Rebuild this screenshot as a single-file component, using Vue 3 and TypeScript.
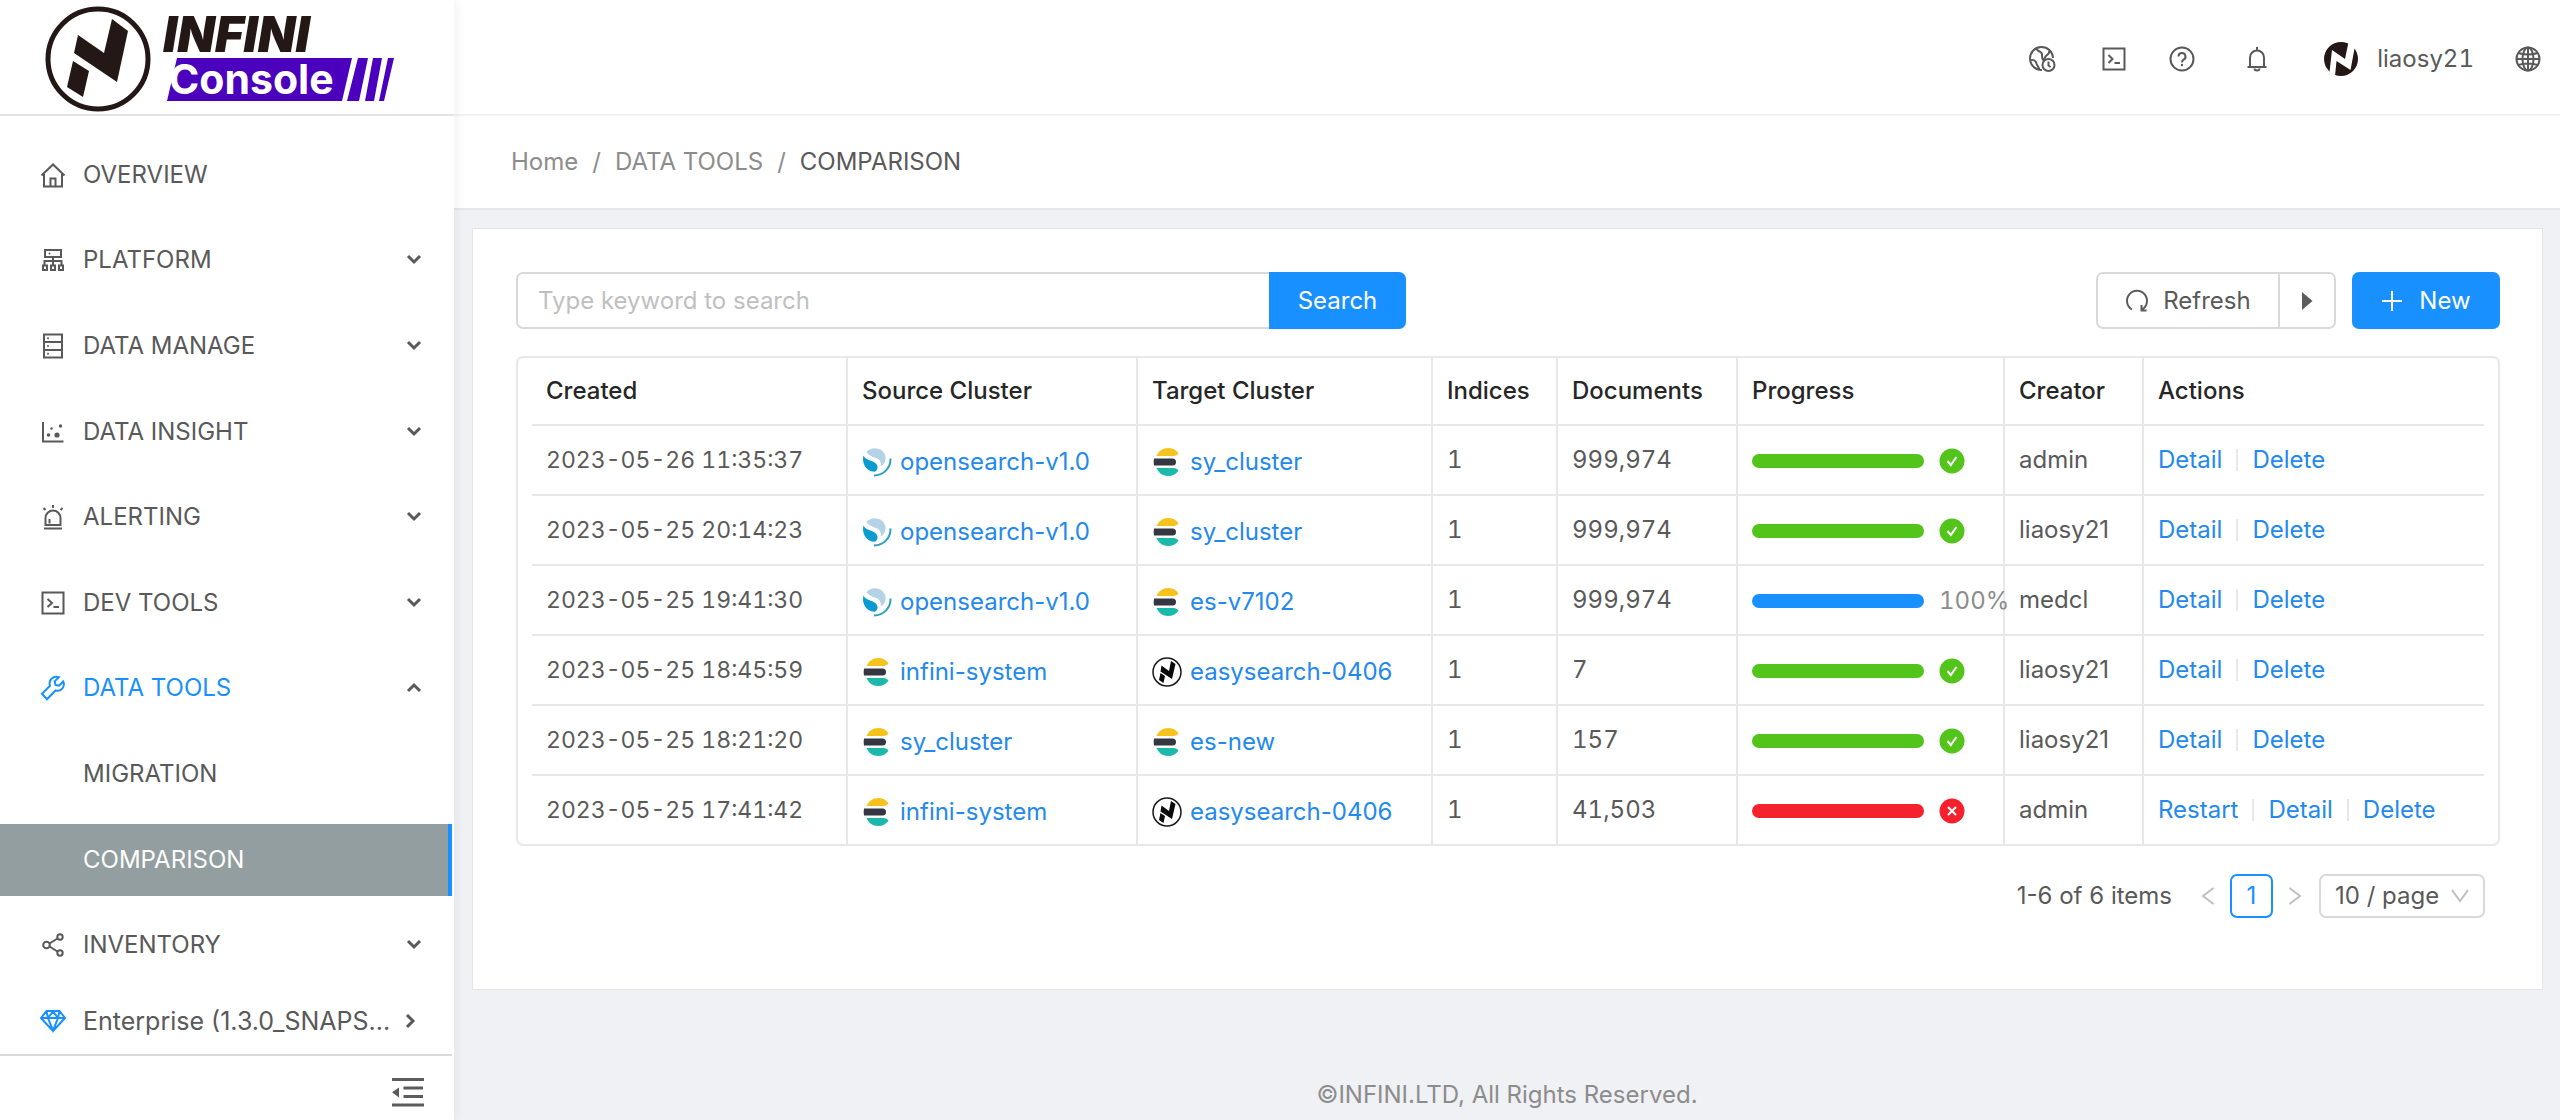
<script setup lang="ts">
import { ref } from 'vue'

type Engine = 'opensearch' | 'elastic' | 'easysearch'
type Status = 'success' | 'active' | 'error'

interface Cluster {
  name: string
  engine: Engine
}

interface Task {
  created: string
  source: Cluster
  target: Cluster
  indices: string
  documents: string
  status: Status
  percent: number
  creator: string
  actions: string[]
}

interface MenuItem {
  key: string
  label: string
  icon: string
  arrow: '' | 'down' | 'up'
}

const menu: MenuItem[] = [
  { key: 'overview', label: 'OVERVIEW', icon: 'home', arrow: '' },
  { key: 'platform', label: 'PLATFORM', icon: 'cluster', arrow: 'down' },
  { key: 'manage', label: 'DATA MANAGE', icon: 'database', arrow: 'down' },
  { key: 'insight', label: 'DATA INSIGHT', icon: 'chart', arrow: 'down' },
  { key: 'alerting', label: 'ALERTING', icon: 'alert', arrow: 'down' },
  { key: 'dev', label: 'DEV TOOLS', icon: 'code', arrow: 'down' },
  { key: 'data-tools', label: 'DATA TOOLS', icon: 'tool', arrow: 'up' },
  { key: 'migration', label: 'MIGRATION', icon: '', arrow: '' },
  { key: 'comparison', label: 'COMPARISON', icon: '', arrow: '' },
  { key: 'inventory', label: 'INVENTORY', icon: 'share', arrow: 'down' },
]

const opensearch: Cluster = { name: 'opensearch-v1.0', engine: 'opensearch' }
const sy: Cluster = { name: 'sy_cluster', engine: 'elastic' }
const system: Cluster = { name: 'infini-system', engine: 'elastic' }
const easy: Cluster = { name: 'easysearch-0406', engine: 'easysearch' }

const tasks: Task[] = [
  { created: '2023-05-26 11:35:37', source: opensearch, target: sy, indices: '1', documents: '999,974', status: 'success', percent: 100, creator: 'admin', actions: ['Detail', 'Delete'] },
  { created: '2023-05-25 20:14:23', source: opensearch, target: sy, indices: '1', documents: '999,974', status: 'success', percent: 100, creator: 'liaosy21', actions: ['Detail', 'Delete'] },
  { created: '2023-05-25 19:41:30', source: opensearch, target: { name: 'es-v7102', engine: 'elastic' }, indices: '1', documents: '999,974', status: 'active', percent: 100, creator: 'medcl', actions: ['Detail', 'Delete'] },
  { created: '2023-05-25 18:45:59', source: system, target: easy, indices: '1', documents: '7', status: 'success', percent: 100, creator: 'liaosy21', actions: ['Detail', 'Delete'] },
  { created: '2023-05-25 18:21:20', source: sy, target: { name: 'es-new', engine: 'elastic' }, indices: '1', documents: '157', status: 'success', percent: 100, creator: 'liaosy21', actions: ['Detail', 'Delete'] },
  { created: '2023-05-25 17:41:42', source: system, target: easy, indices: '1', documents: '41,503', status: 'error', percent: 100, creator: 'admin', actions: ['Restart', 'Detail', 'Delete'] },
]

const columns = ['Created', 'Source Cluster', 'Target Cluster', 'Indices', 'Documents', 'Progress', 'Creator', 'Actions']

const keyword = ref('')
const pageSize = ref('10')
</script>

<template>
  <div class="app">
    <aside class="sider">
      <a class="logo" href="#" aria-label="INFINI Console">
        <svg width="400" height="114" viewBox="0 0 400 114">
          <circle cx="98" cy="59" r="50" fill="none" stroke="#231815" stroke-width="5" />
          <path fill="#231815" d="M112 19l16 12-11 51-43-29 4-18 26 18zM73 61l16 10-6 26-16-10z" />
          <text class="logo-top" x="163" y="52">INFINI</text>
          <path fill="#4b00bd" d="M177 58h175l-10 43H167zM358 58h10l-9 43h-12zM373 58h9l-8 43h-9zM388 58h6l-10 43h-5z" />
          <text class="logo-sub" x="169" y="94">Console</text>
        </svg>
      </a>
      <nav class="nav">
        <ul class="menu">
          <li v-for="item in menu" :key="item.key" :class="['menu-item', item.key]">
            <a href="#" class="menu-link">
              <span class="menu-icon">
                <svg v-if="item.icon === 'home'" class="ic" viewBox="0 0 26 26">
                  <path d="M1.500 13.500L13 2.500l11.500 11M4 12v12.500h18V12M10.500 24v-7.500h5V24" />
                </svg>
                <svg v-else-if="item.icon === 'cluster'" class="ic" viewBox="0 0 26 26">
                  <path d="M5 3h16v7H5zM13 10v8M4.500 18v-4h17v4M3 18.500h4V23H3zM11 18.500h4V23h-4zM19 18.500h4V23h-4z" />
                  <circle cx="9.500" cy="6.500" r="1" class="solid" />
                </svg>
                <svg v-else-if="item.icon === 'database'" class="ic" viewBox="0 0 26 26">
                  <path d="M4 1.500h18v23H4zM4 9h18M4 17h18" />
                  <circle cx="8" cy="5.300" r="1" class="solid" />
                  <circle cx="8" cy="13" r="1" class="solid" />
                  <circle cx="8" cy="20.700" r="1" class="solid" />
                </svg>
                <svg v-else-if="item.icon === 'chart'" class="ic" viewBox="0 0 26 26">
                  <path d="M3 3v19.500h20.500" />
                  <circle cx="8.500" cy="16" r="1.800" class="solid" />
                  <circle cx="17" cy="16" r="2.600" class="solid" />
                  <circle cx="11.500" cy="9.500" r="1.200" class="solid" />
                  <circle cx="20.500" cy="7" r="1.700" class="solid" />
                </svg>
                <svg v-else-if="item.icon === 'alert'" class="ic" viewBox="0 0 26 26">
                  <path d="M5.500 21v-7a7.500 7.500 0 0 1 15 0v7zM4 24.500h18M9.500 19.500V15M13 1v3M3.500 4l2 2M22.500 4l-2 2" />
                </svg>
                <svg v-else-if="item.icon === 'code'" class="ic" viewBox="0 0 26 26">
                  <path d="M2.500 2.500h21v21h-21zM7.500 9l4.500 4-4.500 4M13.500 17H19" />
                </svg>
                <svg v-else-if="item.icon === 'tool'" class="ic" viewBox="0 0 26 26">
                  <path d="M23.200 6.500l-4.200 4.200-3.500-.8-.8-3.500 4.200-4.200c-3-1-6-.2-7.800 2-1.500 2-1.900 4.300-1.100 6.500L2 18.700l5 5.500 8.500-8.700c2.200.7 4.600.2 6.300-1.500 2-2 2.500-5 1.400-7.500z" />
                </svg>
                <svg v-else-if="item.icon === 'share'" class="ic" viewBox="0 0 26 26">
                  <circle cx="6.500" cy="13" r="3.300" />
                  <circle cx="20" cy="5" r="2.700" />
                  <circle cx="20" cy="21" r="2.700" />
                  <path d="M9.500 11.500l8-5M9.500 14.500l8 5" />
                </svg>
              </span>
              <span class="menu-label">{{ item.label }}</span>
              <svg v-if="item.arrow" class="arrow" viewBox="0 0 16 16">
                <path v-if="item.arrow === 'down'" d="M2 4l6 6 6-6" />
                <path v-else d="M2 11l6-6 6 6" />
              </svg>
            </a>
          </li>
        </ul>
        <a href="#" class="menu-link license">
          <span class="menu-icon blue">
            <svg class="ic" viewBox="0 0 26 26">
              <path d="M6.500 3h13L25 10 13 23 1 10zM1.500 10h23M6.500 3L8 10l5 12.500L18 10l1.500-7M8 10l5-6.500 5 6.500" />
            </svg>
          </span>
          <span class="menu-label">Enterprise (1.3.0_SNAPS...</span>
          <svg class="arrow" viewBox="0 0 16 16"><path d="M5 2l6 6-6 6" /></svg>
        </a>
      </nav>
      <button class="trigger" type="button" aria-label="Collapse menu">
        <svg width="32" height="30" viewBox="0 0 32 30">
          <path d="M0 1.500h32M11.500 10H31M11.500 18.500H31M0 27h32" fill="none" stroke="#5c5c5c" stroke-width="3" />
          <path d="M0 14.300L7 9.500v10z" fill="#5c5c5c" />
        </svg>
      </button>
    </aside>

    <div class="body">
      <header class="header">
        <button class="hbtn time" type="button" aria-label="Time zone">
          <svg width="28" height="28" viewBox="0 0 28 28">
            <path d="M25 13A11.500 11.500 0 1 0 14 25M8.500 3.500c1 3.500 5 2.500 5.500 5.500 0 2-.5 5 1.500 6.500 1-1.500 1-3 2.500-4.500s3-1.500 3.500-5M2.500 15c3-.5 5.500 1 6 3.500.5 2 2 3 3 6" />
            <circle cx="20.500" cy="20" r="6" />
            <path d="M20.500 16.500v4l2 1.500" />
          </svg>
        </button>
        <button class="hbtn console" type="button" aria-label="Console">
          <svg width="24" height="24" viewBox="0 0 24 24"><path d="M1.500 1.500h21v21h-21zM6.500 8l4 4-4 4M12.500 16H18" /></svg>
        </button>
        <button class="hbtn help" type="button" aria-label="Help">
          <svg width="26" height="26" viewBox="0 0 26 26">
            <circle cx="13" cy="13" r="11.500" />
            <path d="M9.500 10.500a3.500 3.500 0 1 1 5 3.200c-1.200.7-1.500 1.200-1.500 2.800" />
            <circle cx="13" cy="19" r="1.200" class="dot" />
          </svg>
        </button>
        <button class="hbtn bell" type="button" aria-label="Notifications">
          <svg width="22" height="26" viewBox="0 0 22 26"><path d="M1.500 21h19M4 21v-9.500a7 7 0 0 1 14 0V21M11 1v3M8.500 22.500a2.500 2 0 0 0 5 0" /></svg>
        </button>
        <a class="user" href="#">
          <svg width="34" height="34" viewBox="0 0 34 34">
            <circle cx="17" cy="17" r="17" fill="#231815" />
            <path fill="#fff" d="M8 8l13 9L24.500 0 31 4l-4.500 24-14-9L11 34 5.500 30z" />
          </svg>
          <span class="num">liaosy21</span>
        </a>
        <button class="hbtn globe" type="button" aria-label="Language">
          <svg width="26" height="26" viewBox="0 0 26 26">
            <circle cx="13" cy="13" r="11.500" />
            <ellipse cx="13" cy="13" rx="5.500" ry="11.500" />
            <path d="M13 1.500v23M1.500 13h23M3.500 7c5 2 14 2 19 0M3.500 19c5-2 14-2 19 0" />
          </svg>
        </button>
      </header>

      <nav class="crumbs" aria-label="Breadcrumb">
        <a href="#">Home</a><span>/</span><a href="#">DATA TOOLS</a><span>/</span><strong>COMPARISON</strong>
      </nav>

      <main class="card">
        <div class="toolbar">
          <form class="search" @submit.prevent>
            <input v-model="keyword" type="text" aria-label="Search keyword" placeholder="Type keyword to search" />
            <button type="submit">Search</button>
          </form>
          <div class="tools">
            <div class="group">
              <button type="button" class="refresh">
                <svg width="24" height="24" viewBox="0 0 24 24">
                  <path d="M7 20.500A10 10 0 1 1 17 20.500M16.500 16v5.500h5" fill="none" stroke="#5c5c5c" stroke-width="2" />
                </svg>
                <span>Refresh</span>
              </button>
              <button type="button" class="play" aria-label="Auto refresh">
                <svg width="12" height="18" viewBox="0 0 12 18"><path d="M1 0l10.500 9L1 18z" fill="#5c5c5c" /></svg>
              </button>
            </div>
            <button type="button" class="new">
              <svg width="22" height="22" viewBox="0 0 22 22"><path d="M11 1v20M1 11h20" stroke="#fff" stroke-width="2" /></svg>
              <span>New</span>
            </button>
          </div>
        </div>

        <div class="table-box">
          <table>
            <colgroup>
              <col v-for="(c, i) in columns" :key="c" :class="'c' + i" />
            </colgroup>
            <thead>
              <tr><th v-for="c in columns" :key="c" scope="col">{{ c }}</th></tr>
            </thead>
            <tbody>
              <tr v-for="t in tasks" :key="t.created">
                <td class="num date">{{ t.created }}</td>
                <td v-for="(cl, k) in [t.source, t.target]" :key="k">
                  <a href="#" class="cluster-link">
                    <svg v-if="cl.engine === 'opensearch'" width="30" height="30" viewBox="0 0 30 30">
                      <path fill="#b5d3e6" d="M4.500 5C7 2 12 .2 17 2c5 1.800 8 7.500 6 12.500-1.200 3-3 4.500-4.500 4.800 1-3 .2-5.500-3-7.500-3.800-2-8.500-2.500-11-6.800z" />
                      <path fill="#0b9bd0" d="M1.500 8.500c2 3.500 4.500 4.200 8 5.500 3.800 1.500 6.500 3.500 6 7-.3 2-1.500 3.300-3 3.700-4.500-.2-8.500-2.700-10.500-7.500-1.200-3-1.200-6-.5-8.700z" />
                      <path fill="none" stroke="#2f9fc0" stroke-width="2" d="M28.500 11.500c.3 9-6.500 17-16.500 17" />
                    </svg>
                    <svg v-else-if="cl.engine === 'elastic'" width="30" height="30" viewBox="0 0 30 30">
                      <path fill="#f6c31c" d="M4.500 9C6.500 4 11 1 16 1c4.500 0 8 1.800 10.500 5.200C25.500 8 23.500 9 21.500 9z" />
                      <path fill="#343741" d="M2 11.500h18.500a3.500 3.500 0 0 1 0 7H2q-.7-3.500 0-7z" />
                      <path fill="#1bb9ab" d="M4.500 21h17c2 0 4 .8 5 2.700C24 27.200 20.500 29 16 29c-5 0-9.500-3-11.500-8z" />
                    </svg>
                    <svg v-else width="30" height="30" viewBox="0 0 30 30">
                      <circle cx="15" cy="15" r="14" fill="#fff" stroke="#1a1a1a" stroke-width="1.500" />
                      <path fill="#0a0a0a" d="M19 4l4.500 3-3.500 15-11.500-7.500 1-6L17 14zM8.500 16l4.500 3-1.500 7L7 23z" />
                    </svg>
                    <span>{{ cl.name }}</span>
                  </a>
                </td>
                <td class="num">{{ t.indices }}</td>
                <td class="num">{{ t.documents }}</td>
                <td>
                  <div :class="['progress', t.status]">
                    <span class="track"><span class="fill" :style="{ width: t.percent + '%' }"></span></span>
                    <span v-if="t.status === 'active'" class="pct num">{{ t.percent }}%</span>
                    <svg v-else width="26" height="26" viewBox="0 0 26 26">
                      <circle cx="13" cy="13" r="12.500" class="badge" />
                      <path v-if="t.status === 'success'" d="M8.500 13l3.300 4 5.700-8" />
                      <path v-else d="M9 9l8 8M17 9l-8 8" />
                    </svg>
                  </div>
                </td>
                <td>{{ t.creator }}</td>
                <td>
                  <div class="actions"><a v-for="a in t.actions" :key="a" href="#">{{ a }}</a></div>
                </td>
              </tr>
            </tbody>
          </table>
        </div>

        <div class="pager">
          <span class="total">1-6 of 6 items</span>
          <button type="button" class="step" aria-label="Previous page">
            <svg width="14" height="18" viewBox="0 0 14 18"><path d="M12.500 1L2 9l10.500 8" /></svg>
          </button>
          <button type="button" class="page">1</button>
          <button type="button" class="step" aria-label="Next page">
            <svg width="14" height="18" viewBox="0 0 14 18"><path d="M1.500 1L12 9 1.500 17" /></svg>
          </button>
          <span class="size">
            <select v-model="pageSize" aria-label="Page size">
              <option value="10">10 / page</option>
              <option value="20">20 / page</option>
            </select>
            <svg width="18" height="16" viewBox="0 0 18 16"><path d="M1 2l8 11 8-11" /></svg>
          </span>
        </div>
      </main>

      <footer class="footer">©INFINI.LTD, All Rights Reserved.</footer>
    </div>
  </div>
</template>

<style>
body {
  background: #f0f1f5;
}
</style>

<style scoped>
* {
  box-sizing: border-box;
}
.app {
  display: flex;
  min-height: 100vh;
  font-family: Inter, "Noto Sans", sans-serif;
  font-size: 24px;
  line-height: 36px;
  color: #595959;
}
a {
  color: inherit;
  text-decoration: none;
}
button,
input,
select {
  font: inherit;
  color: inherit;
  margin: 0;
}
button {
  cursor: pointer;
  padding: 0;
  background: none;
  border: 0;
}
svg {
  flex: none;
  display: block;
}
.num {
  font-variant-numeric: tabular-nums;
}
.sider {
  position: relative;
  z-index: 1;
  flex: 0 0 454px;
  min-width: 0;
  height: 100vh;
  display: flex;
  flex-direction: column;
  background: #fff;
  box-shadow: 2px 0 12px rgba(29, 35, 41, 0.06);
}
.logo {
  flex: none;
  height: 116px;
  border-bottom: 2px solid #e4e4e4;
}
.logo-top {
  font-size: 49px;
  font-weight: 900;
  font-style: italic;
  fill: #231815;
}
.logo-sub {
  font-size: 41px;
  font-weight: 700;
  fill: #fff;
}
.nav {
  flex: 1 1 0;
  min-height: 0;
  display: flex;
  flex-direction: column;
  padding-top: 16px;
  margin-right: 2px;
}
.menu {
  flex: 1 1 0;
  min-height: 0;
  list-style: none;
  margin: 0;
  padding: 0;
  display: flex;
  flex-direction: column;
}
.menu-item {
  flex: 0 1 86px;
  display: flex;
  flex-direction: column;
  justify-content: center;
}
.menu-link {
  display: flex;
  align-items: center;
  height: 72px;
  padding: 0 30px 0 40px;
}
.menu-icon {
  flex: 0 0 26px;
  margin-right: 17px;
}
.ic {
  width: 26px;
  height: 26px;
  fill: none;
  stroke: currentColor;
  stroke-width: 2;
}
.solid {
  fill: currentColor;
  stroke: none;
}
.menu-label {
  flex: 1;
  min-width: 0;
  white-space: nowrap;
}
.arrow {
  width: 16px;
  height: 16px;
  margin-left: 16px;
  fill: none;
  stroke: #595959;
  stroke-width: 3;
}
.data-tools .menu-link,
.blue {
  color: #1890ff;
}
.comparison .menu-link {
  background: #929e9f;
  color: #fff;
  border-right: 4px solid #1890ff;
}
.license {
  flex: none;
  height: 66px;
  font-size: 25px;
}
.license .arrow {
  margin-left: 8px;
  margin-right: 4px;
}
.trigger {
  flex: none;
  display: flex;
  justify-content: flex-end;
  height: 66px;
  margin-right: 2px;
  padding: 22px 28px 0 0;
  border-top: 2px solid #d9d9d9;
}
.body {
  flex: 1;
  min-width: 0;
  display: flex;
  flex-direction: column;
}
.header {
  display: flex;
  justify-content: flex-end;
  align-items: center;
  height: 116px;
  padding: 4px 19px 0 0;
  background: #fff;
  border-bottom: 2px solid #f2f2f2;
}
.hbtn svg {
  fill: none;
  stroke: #595959;
  stroke-width: 2;
}
.hbtn .dot {
  fill: #595959;
  stroke: none;
}
.console {
  margin-left: 46px;
}
.help {
  margin-left: 43px;
}
.bell {
  margin-left: 51px;
}
.user {
  display: flex;
  align-items: center;
  gap: 19px;
  margin: 0 41px 0 56px;
}
.crumbs {
  display: flex;
  align-items: center;
  gap: 14px;
  height: 94px;
  padding-left: 57px;
  background: #fff;
  border-bottom: 2px solid #e6e6e9;
  color: #8c8c8c;
}
.crumbs strong {
  font-weight: 400;
  color: #595959;
}
.card {
  margin: 18px 17px 0 18px;
  padding: 43px 42px 71px 43px;
  background: #fff;
  border: 1px solid #e6e6e6;
}
.toolbar {
  display: flex;
  justify-content: space-between;
  gap: 16px;
  height: 57px;
  margin-bottom: 27px;
}
.search {
  display: flex;
  flex: 0 1 890px;
  min-width: 0;
}
.search input {
  flex: 1;
  min-width: 0;
  padding: 0 20px;
  border: 2px solid #d9d9d9;
  border-right: 0;
  border-radius: 7px 0 0 7px;
  background: #fff;
  outline: 0;
}
.search input::placeholder {
  color: #bfbfbf;
  opacity: 1;
}
.search button {
  flex: 0 0 137px;
  color: #fff;
  background: #1890ff;
  border-radius: 0 7px 7px 0;
}
.tools {
  display: flex;
  gap: 16px;
}
.group {
  display: flex;
  border: 2px solid #d9d9d9;
  border-radius: 7px;
}
.refresh {
  display: flex;
  align-items: center;
  justify-content: center;
  gap: 14px;
  width: 182px;
  border-right: 2px solid #d9d9d9;
}
.play {
  display: flex;
  align-items: center;
  justify-content: center;
  width: 54px;
}
.new {
  display: flex;
  align-items: center;
  justify-content: center;
  gap: 16px;
  width: 148px;
  color: #fff;
  background: #1890ff;
  border-radius: 7px;
}
.table-box {
  padding: 0 14px;
  border: 2px solid #e8e8e8;
  border-radius: 7px;
}
table {
  width: 100%;
  table-layout: fixed;
  border-collapse: separate;
  border-spacing: 0;
}
.c0 { width: 316px; }
.c1 { width: 290px; }
.c2 { width: 295px; }
.c3 { width: 125px; }
.c4 { width: 180px; }
.c5 { width: 267px; }
.c6 { width: 139px; }
th,
td {
  height: 70px;
  padding: 0 0 0 14px;
  text-align: left;
  white-space: nowrap;
  border-right: 2px solid #e8e8e8;
  border-bottom: 2px solid #e8e8e8;
}
th {
  height: 68px;
  font-weight: 500;
  color: #262626;
}
th:last-child,
td:last-child {
  border-right: 0;
}
tbody tr:last-child td {
  height: 68px;
  border-bottom: 0;
}
.date {
  font-size: 23px;
}
.cluster-link {
  display: flex;
  align-items: center;
  gap: 8px;
  padding-top: 4px;
  color: #2389ee;
}
.progress {
  display: flex;
  align-items: center;
  gap: 15px;
  height: 36px;
  margin-top: 2px;
}
.track {
  flex: 0 0 172px;
  height: 14px;
  border-radius: 7px;
  background: #f5f5f5;
}
.fill {
  display: block;
  height: 14px;
  border-radius: 7px;
  background: #52c41a;
}
.active .fill {
  background: #1890ff;
}
.error .fill {
  background: #f5222d;
}
.badge {
  fill: #52c41a;
  stroke: none;
}
.error .badge {
  fill: #f5222d;
}
.progress svg {
  fill: none;
  stroke: #fff;
  stroke-width: 2;
}
.pct {
  color: #8c8c8c;
}
.actions {
  display: flex;
  align-items: center;
  color: #2389ee;
}
.actions a + a::before {
  content: "";
  display: inline-block;
  width: 2px;
  height: 22px;
  margin: 0 14px;
  vertical-align: -3px;
  background: #e8e8e8;
}
.pager {
  display: flex;
  align-items: center;
  justify-content: flex-end;
  margin: 28px 15px 0 0;
}
.step {
  width: 14px;
  margin: 0 15px;
}
.step svg,
.size svg {
  fill: none;
  stroke: #bfbfbf;
  stroke-width: 2;
}
.total {
  margin-right: 14px;
}
.page {
  width: 43px;
  height: 44px;
  color: #1890ff;
  border: 2px solid #1890ff;
  border-radius: 7px;
}
.size {
  position: relative;
  margin-left: 2px;
}
.size select {
  display: block;
  width: 166px;
  height: 44px;
  padding: 0 0 0 14px;
  appearance: none;
  background: #fff;
  border: 2px solid #d9d9d9;
  border-radius: 7px;
}
.size svg {
  position: absolute;
  right: 16px;
  top: 14px;
  pointer-events: none;
}
.footer {
  margin-top: auto;
  padding-bottom: 7px;
  text-align: center;
  color: #8c8c8c;
}
</style>
